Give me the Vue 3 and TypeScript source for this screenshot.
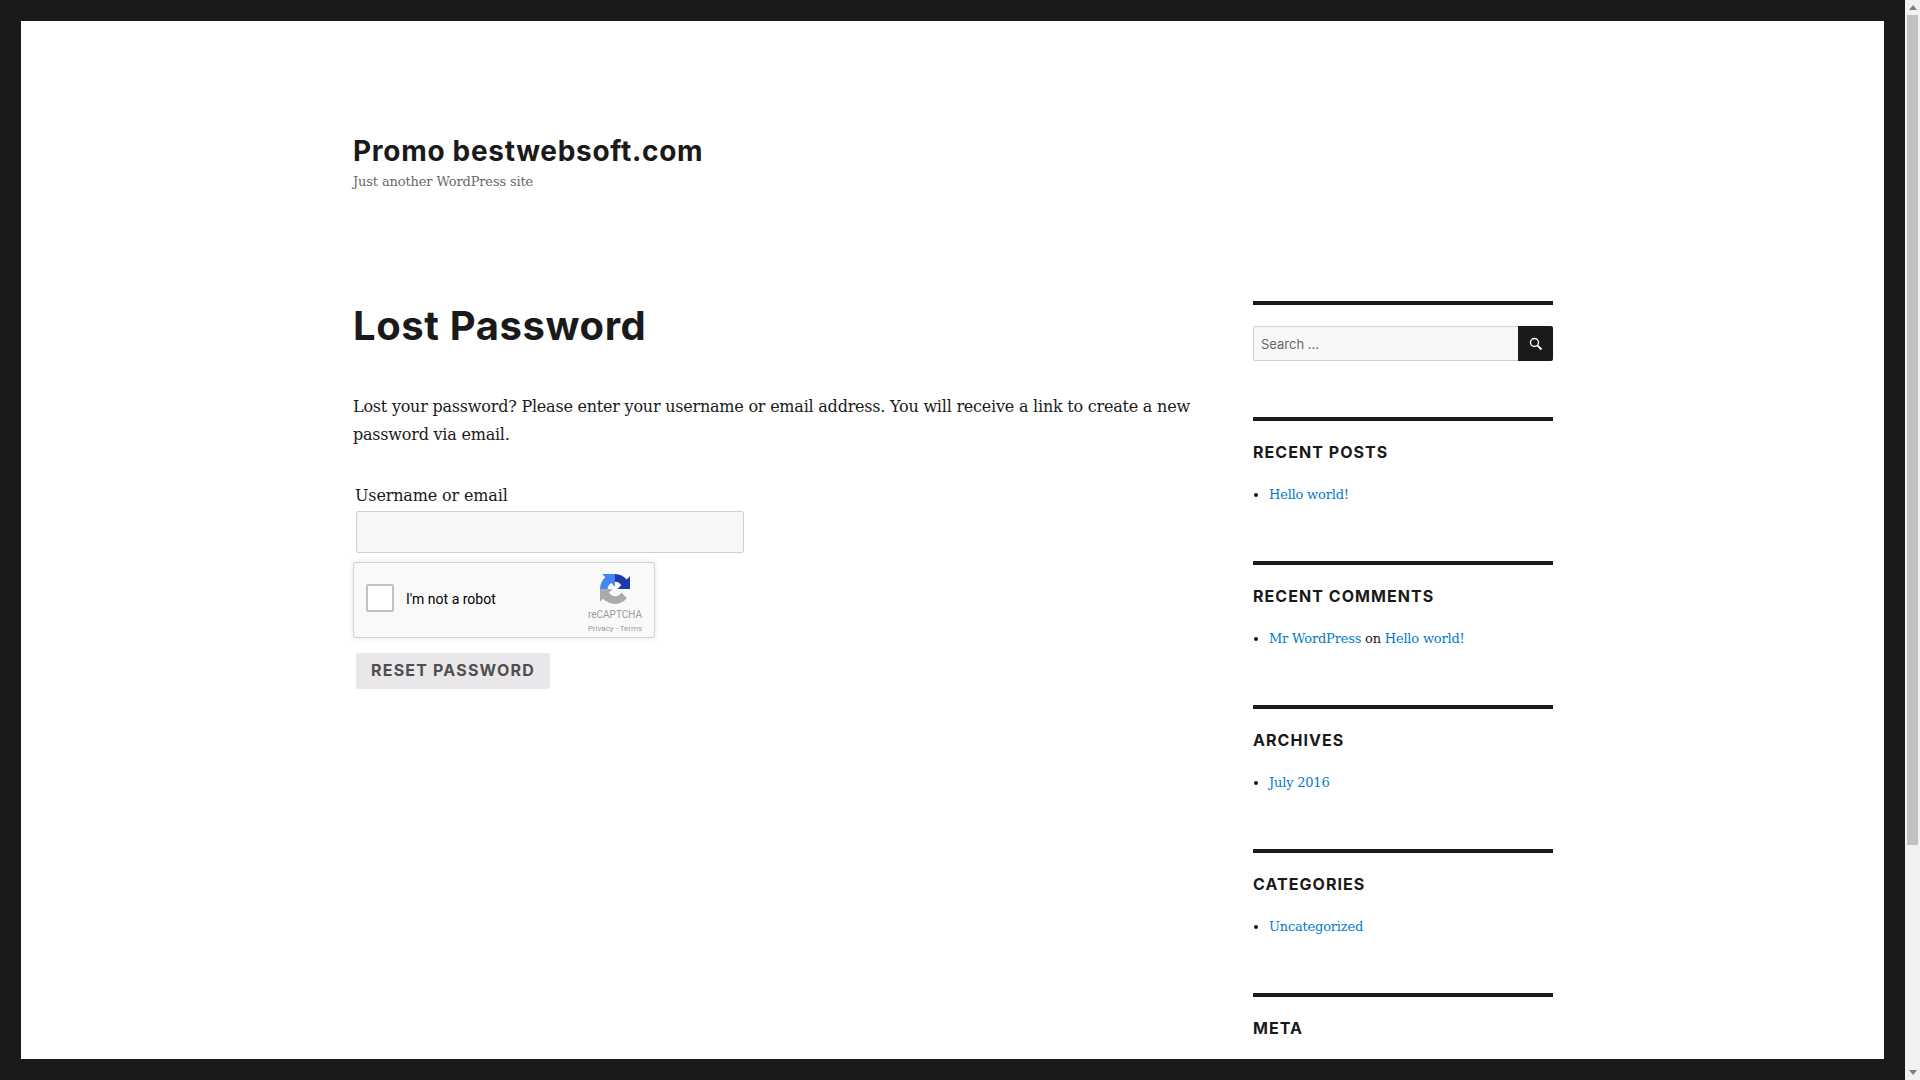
<script setup lang="ts">
interface Widget {
  title: string
  links: { text: string; suffix?: string; link2?: string }[]
}

const widgets: Widget[] = [
  { title: 'Recent Posts', links: [{ text: 'Hello world!' }] },
  { title: 'Recent Comments', links: [{ text: 'Mr WordPress', suffix: ' on ', link2: 'Hello world!' }] },
  { title: 'Archives', links: [{ text: 'July 2016' }] },
  { title: 'Categories', links: [{ text: 'Uncategorized' }] },
  { title: 'Meta', links: [] }
]
</script>

<template>
  <div class="screen">
    <div class="frame">
      <div class="page">
        <div class="inner">
          <header class="site-header">
            <h1 class="site-title">Promo bestwebsoft.com</h1>
            <p class="tagline">Just another WordPress site</p>
          </header>
          <div class="columns">
            <main class="content">
              <h1 class="entry-title">Lost Password</h1>
              <p class="intro">Lost your password? Please enter your username or email address. You will receive a link to create a new password via email.</p>
              <form class="reset-form" @submit.prevent>
                <label class="field-label" for="user">Username or email</label>
                <input id="user" class="field" type="text" />
                <div class="captcha">
                  <span class="captcha-box"></span>
                  <span class="captcha-text">I'm not a robot</span>
                  <div class="captcha-brand">
                    <svg class="captcha-logo" viewBox="0 0 64 64" width="30" height="30">
                      <path fill="#1c3aa9" d="M64 31.955l-.033-1.37V4.687l-7.16 7.16C50.948 4.674 42.033.093 32.05.093 21.663.093 12.433 5.05 6.6 12.73l11.736 11.86a15.54 15.54 0 0 1 4.754-5.342c2.05-1.6 4.952-2.906 9.04-2.906.494 0 .876.058 1.156.166 5.066.4 9.457 3.195 12.042 7.25l-8.307 8.307c10.522-.04 22.41-.066 26.98.001" />
                      <path fill="#4285f4" d="M31.862.094l-1.37.033H4.594l7.16 7.16C4.58 13.146 0 22.06 0 32.046c0 10.387 4.958 19.617 12.636 25.45l11.86-11.736a15.54 15.54 0 0 1-5.342-4.754c-1.6-2.05-2.906-4.952-2.906-9.04 0-.494.058-.876.166-1.156.4-5.066 3.195-9.457 7.25-12.042l8.307 8.307c-.04-10.522-.066-22.41.001-26.98" />
                      <path fill="#ababab" d="M.001 32.045l.033 1.37v25.898l7.16-7.16c5.86 7.173 14.774 11.754 24.76 11.754 10.387 0 19.617-4.958 25.45-12.636L45.668 39.41a15.54 15.54 0 0 1-4.754 5.342c-2.05 1.6-4.952 2.906-9.04 2.906-.494 0-.876-.058-1.156-.166-5.066-.4-9.457-3.195-12.042-7.25l8.307-8.307c-10.522.04-22.41.066-26.98-.001" />
                    </svg>
                    <span class="captcha-name">reCAPTCHA</span>
                    <span class="captcha-links">Privacy - Terms</span>
                  </div>
                </div>
                <button class="reset-btn" type="submit">Reset Password</button>
              </form>
            </main>
            <aside class="sidebar">
              <section class="widget search-widget">
                <div class="search-row">
                  <input class="search-input" type="text" placeholder="Search ..." />
                  <button class="search-btn" type="button" aria-label="Search">
                    <svg viewBox="0 0 16 16" width="16" height="16" fill="none" stroke="#fff">
                      <circle cx="6.5" cy="6.5" r="4" stroke-width="1.4" />
                      <path d="M9.6 9.6l3.9 3.9" stroke-width="1.8" />
                    </svg>
                  </button>
                </div>
              </section>
              <section v-for="w in widgets" :key="w.title" class="widget">
                <h2 class="widget-title">{{ w.title }}</h2>
                <ul v-if="w.links.length" class="widget-list">
                  <li v-for="l in w.links" :key="l.text">
                    <a href="#">{{ l.text }}</a>{{ l.suffix }}<a v-if="l.link2" href="#">{{ l.link2 }}</a>
                  </li>
                </ul>
              </section>
            </aside>
          </div>
        </div>
      </div>
    </div>
    <div class="scrollbar">
      <span class="arrow up"></span>
      <div class="track"><div class="thumb"></div></div>
      <span class="arrow down"></span>
    </div>
  </div>
</template>

<style>
html, body {
  margin: 0;
  overflow: hidden;
}
</style>

<style scoped>
.screen {
  display: flex;
  width: 1920px;
  height: 1080px;
  overflow: hidden;
  background: #1a1a1a;
}

.frame {
  flex: 1;
  padding: 21px;
  min-width: 0;
}

.page {
  height: 100%;
  background: #fff;
  overflow: hidden;
}

.inner {
  width: 1200px;
  margin-left: 332px;
  padding-top: 110px;
}

.site-title {
  margin: 0;
  font: 700 28px/40px Inter, sans-serif;
  letter-spacing: 0.7px;
  color: #1a1a1a;
}

.tagline {
  margin: 0;
  font: 400 13px/21px "DejaVu Serif", serif;
  letter-spacing: -0.14px;
  color: #686868;
}

.columns {
  display: flex;
  justify-content: space-between;
  margin-top: 101px;
}

.content {
  width: 840px;
}

.entry-title {
  margin: 1px 0 0;
  font: 700 40px/64px Inter, sans-serif;
  letter-spacing: 0.6px;
  color: #1a1a1a;
}

.intro {
  margin: 35px 0 0;
  font: 400 16px/28px "DejaVu Serif", serif;
  letter-spacing: -0.22px;
  color: #1a1a1a;
}

.reset-form {
  display: flex;
  flex-direction: column;
  align-items: flex-start;
  margin-top: 33px;
}

.field-label {
  margin-left: 2px;
  font: 400 16px/28px "DejaVu Serif", serif;
  letter-spacing: -0.15px;
  color: #1a1a1a;
}

.field {
  box-sizing: border-box;
  width: 388px;
  height: 42px;
  margin: 1px 0 0 3px;
  background: #f7f7f7;
  border: 1px solid #d1d1d1;
  border-radius: 2px;
  outline: none;
}

.captcha {
  box-sizing: border-box;
  display: flex;
  align-items: center;
  position: relative;
  width: 302px;
  height: 76px;
  margin-top: 9px;
  background: #f9f9f9;
  border: 1px solid #d3d3d3;
  border-radius: 3px;
  box-shadow: 0 0 4px 1px rgba(0, 0, 0, 0.08);
}

.captcha-box {
  box-sizing: border-box;
  width: 28px;
  height: 28px;
  margin: 0 0 4px 12px;
  background: #fff;
  border: 2px solid #c1c1c1;
  border-radius: 2px;
}

.captcha-text {
  margin: 0 0 2px 12px;
  font: 400 14px/17px Roboto, sans-serif;
  color: #000;
}

.captcha-brand {
  position: absolute;
  top: 11px;
  right: 11px;
  width: 56px;
  display: flex;
  flex-direction: column;
  align-items: center;
}

.captcha-logo {
  display: block;
}

.captcha-name {
  margin-top: 5px;
  font: 400 10px/12px Roboto, sans-serif;
  color: #9b9b9b;
}

.captcha-links {
  margin-top: 2px;
  font: 400 8px/12px Roboto, sans-serif;
  color: #9b9b9b;
  white-space: nowrap;
}

.reset-btn {
  box-sizing: border-box;
  width: 194px;
  height: 36px;
  margin: 15px 0 0 3px;
  padding: 0 0 2px;
  background: #e9e7ea;
  border: 0;
  border-radius: 2px;
  font: 700 16px/20px Inter, sans-serif;
  letter-spacing: 1.2px;
  text-transform: uppercase;
  color: #4f4f4f;
}

.sidebar {
  width: 300px;
  margin-top: 8px;
}

.widget {
  box-sizing: border-box;
  height: 144px;
  border-top: 4px solid #1a1a1a;
  padding-top: 20px;
}

.search-widget {
  height: 116px;
}

.search-row {
  display: flex;
  height: 35px;
  margin-top: 1px;
}

.search-input {
  box-sizing: border-box;
  flex: 1;
  min-width: 0;
  padding: 0 7px;
  background: #f7f7f7;
  border: 1px solid #d1d1d1;
  border-right: 0;
  border-radius: 2px 0 0 2px;
  outline: none;
  font: 400 13px/20px Inter, sans-serif;
}

.search-input::placeholder {
  color: #686868;
  opacity: 1;
}

.search-btn {
  display: flex;
  align-items: center;
  justify-content: center;
  width: 35px;
  padding: 0;
  background: #1a1a1a;
  border: 0;
  border-radius: 0 2px 2px 0;
}

.widget-title {
  margin: -3px 0 0;
  font: 700 16px/28px Inter, sans-serif;
  letter-spacing: 1.05px;
  text-transform: uppercase;
  color: #1a1a1a;
}

.widget-list {
  margin: 15px 0 0;
  padding: 0 0 0 16px;
  font: 400 13px/28px "DejaVu Serif", serif;
  letter-spacing: -0.2px;
  color: #1a1a1a;
}

.widget-list a {
  color: #007acc;
  text-decoration: none;
}

.scrollbar {
  display: flex;
  flex-direction: column;
  align-items: center;
  width: 15px;
  background: #f1f1f1;
}

.arrow {
  flex: none;
  width: 0;
  height: 0;
  margin: 5px 0;
  border-left: 4px solid transparent;
  border-right: 4px solid transparent;
}

.arrow.up {
  border-bottom: 5px solid #7f7f7f;
}

.arrow.down {
  border-top: 5px solid #7f7f7f;
}

.track {
  flex: 1;
  width: 100%;
}

.thumb {
  height: 830px;
  margin: 0 2px;
  background: #c1c1c1;
}
</style>
